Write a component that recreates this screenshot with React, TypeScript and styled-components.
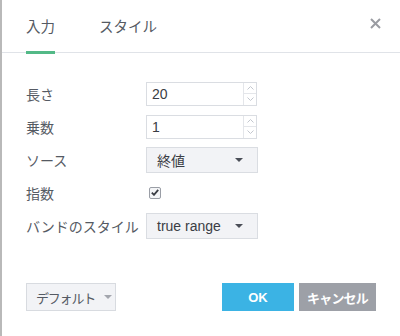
import React from 'react';
import styled, { createGlobalStyle } from 'styled-components';

const Global = createGlobalStyle`
  html, body {
    margin: 0;
    padding: 0;
    background: #ffffff;
  }
  body {
    font-family: "Liberation Sans", "Noto Sans CJK JP", sans-serif;
  }
`;

const Dialog = styled.div`
  box-sizing: border-box;
  width: 400px;
  height: 336px;
  border-left: 2px solid #b9b9b9;
  display: flex;
  flex-direction: column;
  color: #555a63;
`;

const Header = styled.div`
  height: 52px;
  border-bottom: 1px solid #e0e3e8;
  display: flex;
  align-items: stretch;
  padding: 0 18px 0 24px;
  gap: 44px;
`;

const Tab = styled.div<{ $active?: boolean }>`
  position: relative;
  display: flex;
  align-items: center;
  padding-bottom: 2px;
  font-size: 14.5px;
  color: #555a63;

  &::after {
    content: '';
    display: ${(p) => (p.$active ? 'block' : 'none')};
    position: absolute;
    left: 0;
    right: 0;
    bottom: -2px;
    height: 3px;
    background: #53b987;
  }
`;

const Close = styled.button`
  margin-left: auto;
  align-self: flex-start;
  margin-top: 18px;
  border: none;
  background: none;
  padding: 0;
  width: 12px;
  height: 12px;
  display: flex;
  cursor: pointer;
`;

const Form = styled.div`
  display: grid;
  grid-template-columns: 120px 112px;
  grid-auto-rows: 33px;
  align-items: center;
  padding: 24px 0 0 24px;
`;

const Label = styled.div`
  font-size: 14px;
  color: #555a63;
  white-space: nowrap;
`;

const NumberBox = styled.div`
  box-sizing: border-box;
  width: 111px;
  height: 24px;
  border: 1px solid #dadde2;
  display: flex;
  background: #fff;
`;

const NumberValue = styled.div`
  flex: 1;
  display: flex;
  align-items: center;
  padding-left: 5px;
  font-size: 14px;
  color: #3a3d44;
`;

const Spinner = styled.div`
  width: 12px;
  border-left: 1px solid #e4e6ea;
  display: flex;
  flex-direction: column;
`;

const SpinHalf = styled.div<{ $top?: boolean }>`
  flex: 1;
  display: flex;
  align-items: center;
  justify-content: center;
  border-bottom: ${(p) => (p.$top ? '1px solid #e4e6ea' : 'none')};
`;

const SelectBox = styled.div`
  box-sizing: border-box;
  width: 112px;
  height: 26px;
  border: 1px solid #dadde2;
  background: #f2f3f6;
  display: flex;
  align-items: center;
  padding: 0 14px 0 10px;
  font-size: 14px;
  color: #3a3d44;
`;

const SelectText = styled.span`
  flex: 1;
`;

const Caret = styled.span<{ $color?: string }>`
  width: 0;
  height: 0;
  border-left: 4px solid transparent;
  border-right: 4px solid transparent;
  border-top: 4px solid ${(p) => p.$color ?? '#4a4e57'};
`;

const Check = styled.span`
  box-sizing: border-box;
  width: 12px;
  height: 12px;
  margin-left: 3px;
  border: 1px solid #9a9ea6;
  border-radius: 2px;
  background: #f4f5f7;
  display: flex;
  align-items: center;
  justify-content: center;
`;

const Footer = styled.div`
  margin-top: auto;
  display: flex;
  align-items: center;
  padding: 0 24px 25px 24px;
`;

const DefaultsButton = styled.button`
  box-sizing: border-box;
  width: 90px;
  height: 28px;
  border: 1px solid #d8dbe0;
  background: #f2f3f6;
  display: flex;
  align-items: center;
  gap: 9px;
  font-family: inherit;
  font-size: 13px;
  letter-spacing: -1.2px;
  color: #555a63;
  padding: 0 0 0 9px;
`;

const ActionButton = styled.button<{ $tone: 'primary' | 'secondary' }>`
  box-sizing: border-box;
  height: 28px;
  width: ${(p) => (p.$tone === 'primary' ? '72px' : '77px')};
  margin-left: ${(p) => (p.$tone === 'primary' ? 'auto' : '5px')};
  border: none;
  background: ${(p) => (p.$tone === 'primary' ? '#3bb3e4' : '#9da0a7')};
  color: #ffffff;
  font-family: inherit;
  font-weight: bold;
  font-size: 13px;
  letter-spacing: ${(p) => (p.$tone === 'primary' ? '0' : '-0.8px')};
  padding: 0;
`;

const Chevron = ({ up }: { up?: boolean }) => (
  <svg width="7" height="4" viewBox="0 0 7 4">
    <path
      d={up ? 'M0.5 3.5 L3.5 0.5 L6.5 3.5' : 'M0.5 0.5 L3.5 3.5 L6.5 0.5'}
      fill="none"
      stroke="#c3c7ce"
      strokeWidth="1"
    />
  </svg>
);

const NumberField = ({ value }: { value: string }) => (
  <NumberBox>
    <NumberValue>{value}</NumberValue>
    <Spinner>
      <SpinHalf $top>
        <Chevron up />
      </SpinHalf>
      <SpinHalf>
        <Chevron />
      </SpinHalf>
    </Spinner>
  </NumberBox>
);

const Select = ({ value }: { value: string }) => (
  <SelectBox>
    <SelectText>{value}</SelectText>
    <Caret />
  </SelectBox>
);

export default function App() {
  return (
    <>
      <Global />
      <Dialog>
        <Header>
          <Tab $active>入力</Tab>
          <Tab>スタイル</Tab>
          <Close aria-label="close">
            <svg width="11" height="11" viewBox="0 0 11 11">
              <path d="M1 1 L10 10 M10 1 L1 10" stroke="#9a9ca2" strokeWidth="2" />
            </svg>
          </Close>
        </Header>

        <Form>
          <Label>長さ</Label>
          <NumberField value="20" />

          <Label>乗数</Label>
          <NumberField value="1" />

          <Label>ソース</Label>
          <Select value="終値" />

          <Label>指数</Label>
          <Check>
            <svg width="8" height="7" viewBox="0 0 8 7">
              <path d="M0.8 3.6 L3 5.8 L7.2 0.8" fill="none" stroke="#3a3d44" strokeWidth="1.8" />
            </svg>
          </Check>

          <Label>バンドのスタイル</Label>
          <Select value="true range" />
        </Form>

        <Footer>
          <DefaultsButton>
            デフォルト
            <Caret $color="#a3a6ad" />
          </DefaultsButton>
          <ActionButton $tone="primary">OK</ActionButton>
          <ActionButton $tone="secondary">キャンセル</ActionButton>
        </Footer>
      </Dialog>
    </>
  );
}
